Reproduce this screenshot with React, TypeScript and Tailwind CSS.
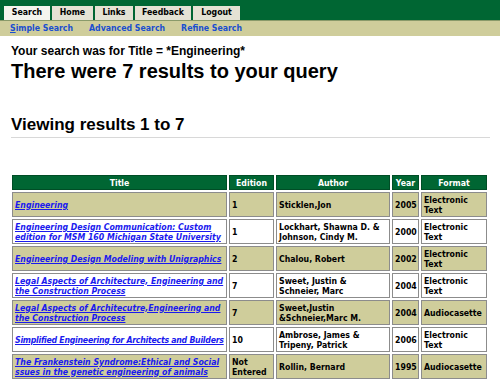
import React from "react";

const rows = [
  { t: "Engineering", e: "1", a: "Sticklen,Jon", y: "2005", f: "Electronic Text" },
  { t: "Engineering Design Communication: Custom edition for MSM 160 Michigan State University", e: "1", a: "Lockhart, Shawna D. & Johnson, Cindy M.", y: "2000", f: "Electronic Text" },
  { t: "Engineering Design Modeling with Unigraphics", e: "2", a: "Chalou, Robert", y: "2002", f: "Electronic Text" },
  { t: "Legal Aspects of Architecture, Engineering and the Construction Process", e: "7", a: "Sweet, Justin & Schneier, Marc", y: "2004", f: "Electronic Text" },
  { t: "Legal Aspects of Architecutre,Engineering and the Construction Process", e: "7", a: "Sweet,Justin &Schneier,Marc M.", y: "2004", f: "Audiocasette" },
  { t: "Simplified Engineering for Architects and Builders", e: "10", a: "Ambrose, James & Tripeny, Patrick", y: "2006", f: "Electronic Text", tight: true },
  { t: "The Frankenstein Syndrome:Ethical and Social ssues in the genetic engineering of animals", e: "Not Entered", a: "Rollin, Bernard", y: "1995", f: "Audiocasette" },
];

const tabs = [
  { t: "Search", w: "w-[46px]" },
  { t: "Home", w: "w-[41px]" },
  { t: "Links", w: "w-[38px]" },
  { t: "Feedback", w: "w-[56px]" },
  { t: "Logout", w: "w-[47px]" },
];

const heads = [
  { h: "Title", w: "w-[215px]" },
  { h: "Edition", w: "w-[45px]" },
  { h: "Author", w: "w-[114px]" },
  { h: "Year", w: "w-[27px]" },
  { h: "Format", w: "w-[66px]" },
];

const vf = { fontFamily: "'DejaVu Sans Condensed', 'DejaVu Sans', Verdana, sans-serif" };
const af = { fontFamily: "'Liberation Sans', Arial, sans-serif" };

export default function App() {
  return (
    <div className="w-[500px] h-[386px] bg-white overflow-hidden">
      <div className="h-[20px] bg-[#006633] flex items-end pl-[4px] gap-[2px]" style={vf}>
        {tabs.map((t, i) => (
          <div
            key={t.t}
            className={`${t.w} h-[14px] flex items-center justify-center text-[8.7px] font-bold font-stretch-condensed text-black ${i === 0 ? "bg-[#f4f4ee]" : "bg-[#e4e2d4]"}`}
          >
            {t.t}
          </div>
        ))}
      </div>
      <div className="h-[16px] bg-[#cfcd9b] border-t border-[#8a9a6a] flex items-center pl-[10px] gap-[16px] text-[8.7px] font-bold font-stretch-condensed text-[#1a4fd0]" style={vf}>
        <span><span className="underline">S</span>imple Search</span>
        <span>Advanced Search</span>
        <span>Refine Search</span>
      </div>
      <div className="pl-[11px] pt-[8px]" style={af}>
        <div className="text-[12px] font-bold leading-[14px] text-black">Your search was for Title = *Engineering*</div>
        <div className="mt-[2px] text-[20px] font-bold leading-[22px] text-black">There were 7 results to your query</div>
      </div>
      <div className="mt-[34px] ml-[11px] mr-[10px] border-b border-[#d8d8d8] pb-[3px]" style={af}>
        <div className="text-[17px] font-bold leading-[18px] text-black">Viewing results 1 to 7</div>
      </div>
      <table
        className="mt-[35px] ml-[10px] table-fixed w-[479px] border-separate border-spacing-[2px] text-[8.7px] font-bold font-stretch-condensed leading-[10px]"
        style={vf}
      >
        <thead>
          <tr>
            {heads.map((h) => (
              <th key={h.h} className={`${h.w} h-[15px] bg-[#006633] text-white text-center font-bold p-0 border border-[#004d26]`}>
                {h.h}
              </th>
            ))}
          </tr>
        </thead>
        <tbody>
          {rows.map((r, i) => {
            const bg = i % 2 === 0 ? "bg-[#cfcd9b]" : "bg-white";
            const td = `${bg} border border-[#8c8c8c] pl-[2px] pr-0 py-0 h-[25px] text-left align-middle text-black`;
            return (
              <tr key={i}>
                <td className={td}>
                  <a className={`italic underline text-[#1a1aee] ${r.tight ? "whitespace-nowrap tracking-[-0.25px]" : ""}`}>{r.t}</a>
                </td>
                <td className={td}>{r.e}</td>
                <td className={td}>{r.a}</td>
                <td className={td}>{r.y}</td>
                <td className={td}>{r.f}</td>
              </tr>
            );
          })}
        </tbody>
      </table>
    </div>
  );
}
